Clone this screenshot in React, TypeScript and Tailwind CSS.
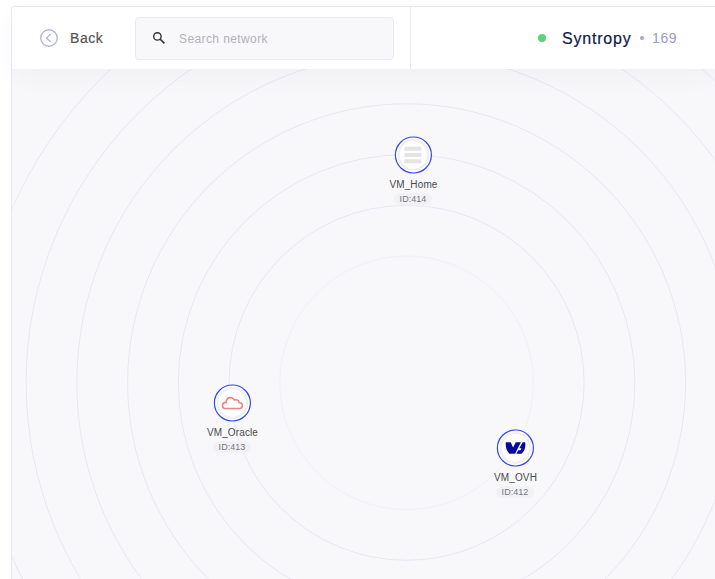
import type { ReactNode } from 'react';

const rings = [
  { r: 126.8, color: '#f0f0f7' },
  { r: 177.5, color: '#e8e8f3' },
  { r: 228.3, color: '#e8e8f3' },
  { r: 279, color: '#e8e8f3' },
  { r: 329.8, color: '#e8e8f3' },
  { r: 380.5, color: '#e8e8f3' },
  { r: 431.3, color: '#e8e8f3' },
];

function Node({ place, name, id, children }: { place: string; name: string; id: string; children: ReactNode }) {
  return (
    <div className={`absolute flex w-20 flex-col items-center ${place}`}>
      <svg className="h-[38px] w-[38px]" viewBox="-0.4 0 38 38">
        <circle cx="19" cy="19" r="18" fill="#fff" stroke="#3546f0" strokeWidth="1.2" />
        <circle cx="19" cy="19" r="14.8" fill="#fff" stroke="#ededf2" strokeWidth="1.8" />
        {children}
      </svg>
      <span className="mt-[4px] h-[13px] whitespace-nowrap pl-px text-[10px] leading-[13px] tracking-[0.12px] text-[#4a4a4a]">{name}</span>
      <span className="mt-[2px] h-[12px] w-[38px] rounded-full bg-[#f1f1f6] text-center text-[9px] leading-[13px] tracking-[0.05px] text-[#777]">{id}</span>
    </div>
  );
}

export default function App() {
  return (
    <div className="h-[579px] w-[715px] overflow-hidden bg-white pl-[11px] pt-[6px] font-['Liberation_Sans',Arial,sans-serif]">
      <div className="flex h-[573px] flex-col rounded-tl-[4px] border-l border-t border-[#e9e9f4]">
        <header className="relative z-10 flex h-[62px] shrink-0 rounded-tl-[3px] bg-white shadow-[0_8px_24px_rgba(0,0,0,0.035)]">
          <div className="flex w-[399px] items-center border-r border-[#e9e9f4] pl-[28px]">
            <svg className="h-[18px] w-[18px]" viewBox="0 0 18 18" fill="none" stroke="#b5b7d9" strokeWidth="1.4">
              <circle cx="9" cy="9" r="8.3" />
              <path d="M10.7 4.9 6.5 9l4.2 4.1" />
            </svg>
            <span className="ml-[12px] w-[65px] text-[14px] tracking-[0.55px] text-[#555] [-webkit-text-stroke:0.2px_#555]">Back</span>
            <div className="mt-px flex h-[43px] w-[259px] items-center rounded-[4px] border border-[#e9e9f4] bg-[#f8f8fb] pl-[16px]">
              <svg className="mb-[2px] h-[14px] w-[14px]" viewBox="0 0 14 14" fill="none" stroke="#333">
                <circle cx="5.4" cy="5.4" r="3.7" strokeWidth="1.4" />
                <path d="m8 8 4.4 4.4" strokeWidth="1.6" />
              </svg>
              <span className="ml-[13px] mt-px text-[12px] tracking-[0.4px] text-[#b2b2b5]">Search network</span>
            </div>
          </div>
          <div className="flex flex-1 items-center pl-[127px]">
            <span className="h-2 w-2 rounded-full bg-[#5dd17b]" />
            <span className="ml-[16px] mt-[2px] w-[78px] text-[16px] leading-[22px] tracking-[0.8px] text-[#141a4c] [-webkit-text-stroke:0.2px_#141a4c]">Syntropy</span>
            <span className="h-1 w-1 rounded-full bg-[#a5a5d0]" />
            <span className="ml-[8px] text-[14px] tracking-[0.6px] text-[#9a9bc4]">169</span>
          </div>
        </header>
        <main className="relative flex-1 bg-[#f8f8fb]">
          <svg className="block h-[510px] w-[703px]" viewBox="12 69 703 510" fill="none">
            {rings.map(({ r, color }) => (
              <circle key={r} cx="406.6" cy="382.8" r={r} stroke={color} />
            ))}
          </svg>
          <Node place="left-[361px] top-[67px]" name="VM_Home" id="ID:414">
            <path d="M10 12.7h17M10 19h17M10 25.3h17" stroke="#e4e4e4" strokeWidth="4" />
          </Node>
          <Node place="left-[180px] top-[315px]" name="VM_Oracle" id="ID:413">
            <path
              d="M12.6 24.5c-2.2 0-3.5-1.3-3.5-3.1 0-2.2 1.6-3.2 3.6-3 .1-2.7 1.8-4.8 4.5-4.8 2 0 3.2 1.2 3.8 2.4 2.3-.9 4.7.4 4.8 2.8 2-.2 3.2 1 3.2 2.7s-1.3 3-3.2 3Z"
              fill="none"
              stroke="#f47f7b"
              strokeWidth="1.6"
            />
          </Node>
          <Node place="left-[463px] top-[360px]" name="VM_OVH" id="ID:412">
            <path
              d="M9.5 13.2h4.8l2.4 5.4 2.7-5.4h5.1l-5.8 11.6h-5.4c-3-2.7-4.6-7.1-3.8-11.6Zm19.2 0c1 4.6-.6 8.9-3.6 11.6h-5.2l2-3.6h2.2l1-2h-2.2l3.3-6Z"
              fill="#09099b"
            />
          </Node>
        </main>
      </div>
    </div>
  );
}
